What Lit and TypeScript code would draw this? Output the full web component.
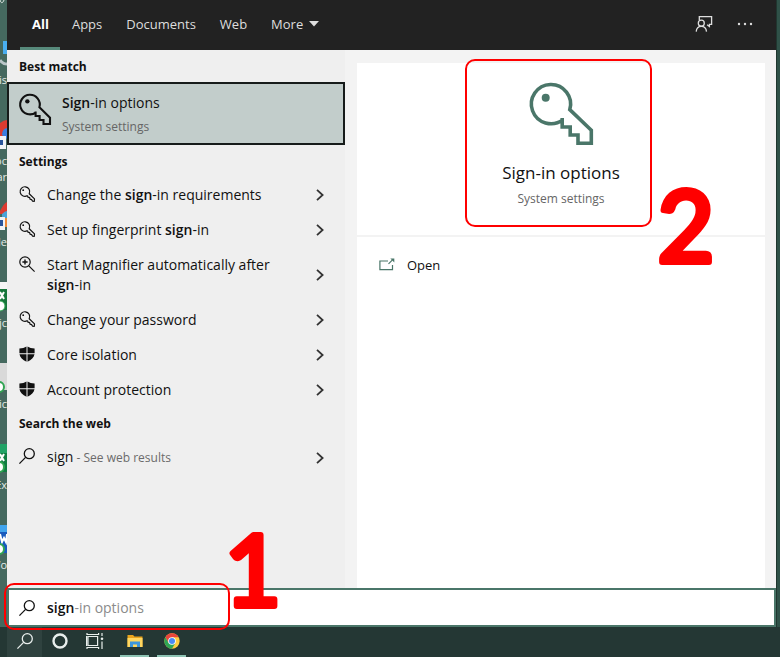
import { LitElement, html, svg, css, nothing } from "lit";
import { customElement, property } from "lit/decorators.js";
import { classMap } from "lit/directives/class-map.js";

type Part = { text: string; strong?: boolean };
type Result = { icon: string; parts: Part[] };

const TABS = ["All", "Apps", "Documents", "Web"];

const SETTINGS: Result[] = [
  { icon: "key", parts: [{ text: "Change the " }, { text: "sign", strong: true }, { text: "-in requirements" }] },
  { icon: "key", parts: [{ text: "Set up fingerprint " }, { text: "sign", strong: true }, { text: "-in" }] },
  { icon: "zoom", parts: [{ text: "Start Magnifier automatically after " }, { text: "sign", strong: true }, { text: "-in" }] },
  { icon: "key", parts: [{ text: "Change your password" }] },
  { icon: "shield", parts: [{ text: "Core isolation" }] },
  { icon: "shield", parts: [{ text: "Account protection" }] },
];

const GLYPHS: Record<string, { box: string; body: unknown }> = {
  bigkey: {
    box: "0 0 64 64",
    body: svg`<path d="M33.2 37V46h8v8H49v8.300h13.300V49.300L40.800 28.600a19.600 19.600 0 1 0-6.800 10" fill="none" stroke="currentColor" stroke-width="3.6"/><circle cx="16.7" cy="16.7" r="4" fill="currentColor"/>`,
  },
  midkey: {
    box: "0 0 64 64",
    body: svg`<path d="M33.2 37V46h8v8H49v8h13V49.300L40.800 28.600a19.600 19.600 0 1 0-6.800 10" fill="none" stroke="currentColor" stroke-width="4.2"/><circle cx="16.7" cy="16.7" r="4.4" fill="currentColor"/>`,
  },
  key: {
    box: "0 0 16 16",
    body: svg`<path d="M8.5 9.6 9 11.2l1.7.5.3 1.5 1.6.4 1 1.6 1.7.1.2-2.4-5.3-5.2A4.8 4.8 0 1 0 8.5 9.6" fill="none" stroke="currentColor" stroke-width="1.2" stroke-linejoin="round"/><circle cx="4.2" cy="4.2" r=".9" fill="currentColor"/>`,
  },
  zoom: {
    box: "0 0 16 16",
    body: svg`<g fill="none" stroke="currentColor" stroke-width="1.2"><circle cx="6" cy="6" r="5.2"/><path d="M9.8 9.8 15.6 15.6"/><path d="M6 3.4v5.2M3.4 6h5.2" stroke-width="1.4"/></g>`,
  },
  shield: {
    box: "0 0 16 16",
    body: svg`<path d="M7.5.4V7.3H.4V2.4C3.3 2.3 5.6 1.6 7.5.4zM8.5.4c1.9 1.2 4.2 1.9 7.1 2v4.900H8.500zM.5 8.300h7v7.400C3.600 14 1 11.600.5 8.300zM8.500 8.300h7c-.5 3.300-3.100 5.700-7 7.400z" fill="currentColor"/>`,
  },
  search: {
    box: "0 0 16 16",
    body: svg`<g fill="none" stroke="currentColor" stroke-width="1.3"><circle cx="10.3" cy="5.7" r="5"/><path d="M6.6 9.4.4 15.6"/></g>`,
  },
  chevron: {
    box: "0 0 8 12",
    body: svg`<path d="M1 .8 6.6 6 1 11.2" fill="none" stroke="currentColor" stroke-width="1.8"/>`,
  },
  caret: { box: "0 0 10 6", body: svg`<path d="M0 0h10L5 5.6z" fill="currentColor"/>` },
  feedback: {
    box: "0 0 18 18",
    body: svg`<g fill="none" stroke="currentColor" stroke-width="1.3"><path d="M4.3 5V1.7h12.3v7.6h-2.2v2.2l-2.3-1.7"/><circle cx="6.3" cy="8.2" r="3"/><path d="M1.2 16.6c.3-3.2 2.2-5.2 5.1-5.2s4.9 2 5.2 5.2"/></g>`,
  },
  dots: {
    box: "0 0 16 16",
    body: svg`<g fill="currentColor"><circle cx="2" cy="8" r="1.2"/><circle cx="8" cy="8" r="1.2"/><circle cx="14" cy="8" r="1.2"/></g>`,
  },
  open: {
    box: "0 0 16 16",
    body: svg`<path d="M9 4H.9v8.600h12.600V8M9.500 6.800 13.500 2.800" fill="none" stroke="currentColor" stroke-width="1.2"/><path d="M11.3 1.5h4v4z" fill="currentColor"/>`,
  },
  cortana: {
    box: "0 0 16 16",
    body: svg`<circle cx="8" cy="8" r="6.5" fill="none" stroke="currentColor" stroke-width="2.4"/>`,
  },
  taskview: {
    box: "0 0 18 16",
    body: svg`<g fill="none" stroke="currentColor" stroke-width="1.2"><path d="M2 3.5h9.6v9H2zM1 0v1.500h11.600V0M1 16v-1.500h11.600V16M.6 3v10M16 0v3M16 8.500V16"/></g><circle cx="16" cy="5.8" r="1.3" fill="currentColor"/>`,
  },
  folder: {
    box: "0 0 16 14",
    body: svg`<path d="M.5 1h5.500l1.500 1.500h8V13H.5z" fill="#e9a41c"/><path d="M.5 4h15v9H.5z" fill="#ffd761"/><path d="M3 13V7.500h10V13h-3v-2.500H6V13z" fill="#3e97dc"/>`,
  },
  chrome: {
    box: "0 0 48 48",
    body: svg`<circle cx="24" cy="24" r="23" fill="#ffcd40"/><path d="M24 12.5h19.9A23 23 0 0 0 4.1 12.5L14 29.8 24 24z" fill="#e8453c"/><path d="M4.1 12.5A23 23 0 0 0 24 47l10-17.300L24 24 14 29.800z" fill="#2ea655"/><circle cx="24" cy="24" r="11.5" fill="#fff"/><circle cx="24" cy="24" r="9" fill="#4a8af4"/>`,
  },
};

const glyph = (name: string) =>
  html`<svg class="glyph ${name}" viewBox=${GLYPHS[name].box} aria-hidden="true">${GLYPHS[name].body}</svg>`;

const parts = (list: Part[]) => list.map((p) => (p.strong ? html`<b>${p.text}</b>` : p.text));

/* A step number with softened corners: the outline is stroked with round joins. */
const digit = (n: number) =>
  html`<svg class="digit" viewBox="0 0 60 90"><text x="30" y="80" text-anchor="middle">${n}</text></svg>`;

const shared = css`
  * { box-sizing: border-box; }
  button, input {
    font: inherit;
    color: inherit;
    background: none;
    border: 0;
    padding: 0;
    margin: 0;
    text-align: left;
  }
  b { font-weight: 600; }
  .glyph { display: block; flex: none; width: 16px; height: 16px; overflow: visible; }
`;

/* Desktop shortcuts, of which only the right edge shows beside the search flyout. */
@customElement("desktop-strip")
class DesktopStrip extends LitElement {
  static styles = css`
    :host { display: block; position: relative; overflow: hidden; background: #45695f; }
    .art { position: absolute; top: 0; right: 0; width: 7px; height: 590px; display: block; }
    .name {
      position: absolute;
      right: 0;
      color: #e4ebe8;
      font: 11px/16px "Open Sans", "Noto Sans", sans-serif;
      white-space: nowrap;
    }
  `;
  render() {
    const names: [string, number][] = [
      ["is", 72], ["oc", 153], ["ar", 169], ["le", 234], ["jc", 315], ["ic", 396], ["Ex", 477], ["Wo", 557],
    ];
    return html`
      <svg class="art" viewBox="0 0 7 590" aria-hidden="true">
        <path d="M0 0c1 4 3 3 4 0" stroke="#dfe6e3" fill="none" />
        <path d="M3 41h4v13H3z" fill="#49aef0" />
        <path d="M0 60c2 3 5 4 7 4" stroke="#b9c6c8" stroke-width="3" fill="none" />
        <path d="M0 123q4-3 7-3v17H0z" fill="#dd3b31" />
        <path d="M7 128q-5 1-5 7l5 4z" fill="#3b7de0" />
        <path d="M0 136h6v13H0z" fill="#f1f3f6" /><path d="M0 140h3v5H0z" fill="#29549b" />
        <path d="M0 211q4-8 7-9v12H0z" fill="#dd3b31" />
        <path d="M2 214q3-3 5-3v8H2z" fill="#4aa3d8" /><path d="M5 218h2v9H5z" fill="#f08a38" />
        <path d="M0 217h5v13H0z" fill="#f1f3f6" /><path d="M0 220h3v6H0z" fill="#29549b" />
        <path d="M0 282h7v8H0z" fill="#f5f5f5" /><path d="M0 289h7v21H0z" fill="#16763a" />
        <path d="M0 292l4 7M4 292l-4 7" stroke="#fff" stroke-width="2" />
        <circle cx="0" cy="306" r="5" fill="#fff" stroke="#31a553" />
        <path d="M0 363h7v27H0z" fill="#d9d9d9" />
        <circle cx="-1" cy="387" r="5" fill="#fff" stroke="#31a553" stroke-width="2" />
        <path d="M0 444h7v9H0z" fill="#21a366" /><path d="M0 453h7v19H0z" fill="#107c41" />
        <path d="M0 454l4 7M4 454l-4 7" stroke="#fff" stroke-width="2" />
        <circle cx="-1" cy="467" r="5" fill="#fff" stroke="#31a553" stroke-width="2" />
        <path d="M0 525h7v7H0z" fill="#41a5ee" /><path d="M0 532h7v21H0z" fill="#185abd" />
        <path d="M0 534l2 8 2-4 2 4 1-8" stroke="#fff" stroke-width="2" fill="none" />
        <circle cx="-1" cy="549" r="5" fill="#fff" stroke="#31a553" stroke-width="2" />
      </svg>
      ${names.map(([text, top]) => html`<span class="name" style="top:${top}px">${text}</span>`)}
    `;
  }
}

@customElement("result-row")
class ResultRow extends LitElement {
  @property({ attribute: false }) icon = "search";
  @property({ attribute: false }) parts: Part[] = [];
  @property() note = "";
  static styles = [
    shared,
    css`
      :host { display: block; }
      .row { display: flex; width: 100%; align-items: flex-start; padding: 8px 21px 7px 12px; line-height: 20px; font-size: 14px; }
      .text { flex: 1; min-width: 0; margin: 0 20px 0 12px; }
      .row .glyph { margin-top: 1px; }
      .row .chevron { width: 8px; height: 12px; margin: 0; align-self: center; color: #333; }
      .note { font-size: 12px; color: #6b6b6b; }
    `,
  ];
  render() {
    return html`<button class="row">
      ${glyph(this.icon)}
      <span class="text">${parts(this.parts)}${this.note ? html`<span class="note"> - ${this.note}</span>` : nothing}</span>
      ${glyph("chevron")}
    </button>`;
  }
}

@customElement("app-root")
class AppRoot extends LitElement {
  static styles = [
    shared,
    css`
      :host {
        display: flex;
        flex-direction: column;
        min-height: 100vh;
        background: #45695f;
        color: #111;
        font: 14px/20px "Open Sans", "Noto Sans", sans-serif;
      }
      .desk { flex: 1; display: grid; grid-template-columns: 7px minmax(0, 1fr) 4px; }
      .edge { background: #2f5148; border-left: 1px solid #20362f; }
      .flyout { display: flex; flex-direction: column; min-width: 0; }

      .top { display: flex; align-items: stretch; height: 50px; padding: 0 23px 0 13px; background: #222; color: #dedede; font-size: 13px; }
      .tab { padding: 1px 12px 0; border-bottom: 3px solid transparent; display: flex; align-items: center; gap: 6px; }
      .tab.on { padding: 1px 11px 0 12px; color: #fff; font-weight: 700; border-color: #578a7b; }
      .caret { width: 10px; height: 6px; }
      .tools { margin-left: auto; display: flex; align-items: center; gap: 24px; padding-bottom: 2px; }
      .feedback { width: 18px; height: 18px; }

      .body { flex: 1; display: grid; grid-template-columns: 338px minmax(0, 1fr); }
      .results { background: #efefef; }
      .heading { margin: 0; padding: 2px 12px 0; font-size: 12px; line-height: 30px; font-weight: 700; }
      .best { display: flex; align-items: flex-start; width: 100%; height: 63px; padding: 9px 10px; gap: 11px; background: #c2cdcb; border: 2px solid #161b1a; }
      .midkey { width: 32px; height: 32px; }
      .best .kind { display: block; margin-top: 4px; }
      .kind { font-size: 12px; color: #666; }

      .preview { display: flex; flex-direction: column; gap: 2px; padding: 13px 11px 0 12px; background: #f3f3f3; }
      .hero { background: #fff; height: 172px; display: flex; justify-content: center; }
      .card { position: relative; display: flex; flex-direction: column; align-items: center; padding-top: 18px; }
      .bigkey { width: 64px; height: 64px; color: #4a7669; }
      .title { margin: 16px 0 0; font-size: 17px; line-height: 24px; font-weight: 400; }
      .card .kind { margin-top: 4px; }
      .actions { flex: 1; background: #fff; padding: 18px 22px; }
      .action { display: flex; align-items: center; gap: 12px; font-size: 13px; }
      .open { color: #4a7669; }

      .searchbox { position: relative; display: flex; align-items: center; height: 39px; padding: 0 10px; background: #fff; border: 2px solid #4a7669; }
      .query { field-sizing: content; margin-left: 12px; font-weight: 600; outline: none; }
      .ghost { color: #8b8b8b; }

      .mark { position: absolute; border: 2px solid #f00; border-radius: 10px; pointer-events: none; }
      .mark.one { top: -7px; left: -5px; width: 226px; height: 47px; }
      .mark.two { top: -4px; left: 50%; width: 187px; height: 168px; margin-left: -96px; }
      .digit { position: absolute; width: 60px; height: 90px; overflow: visible; }
      .digit text { font: 400 98px Lato, sans-serif; fill: #f00; stroke: #f00; stroke-width: 6px; stroke-linejoin: round; }
      .one .digit { left: 217px; bottom: 12px; }
      .two .digit { left: 189px; bottom: -47px; }

      .taskbar { display: flex; height: 30px; padding-left: 7px; background: #243734; color: #e8eeec; }
      .task { display: flex; align-items: center; justify-content: center; width: 35px; border-bottom: 2px solid transparent; }
      .task.on { background: #2f423f; }
      .task.running { width: 29px; margin-left: 8px; border-color: #8fc4b4; }
      .taskview { width: 18px; }
      .folder { height: 14px; }
    `,
  ];

  render() {
    const tasks = ["search", "cortana", "taskview", "folder", "chrome"];
    const labels = ["Search", "Cortana", "Task View", "File Explorer", "Chrome"];
    return html`
      <div class="desk">
        <desktop-strip></desktop-strip>
        <main class="flyout">
          <nav class="top">
            ${TABS.map((t, i) => html`<button class=${classMap({ tab: true, on: i === 0 })}>${t}</button>`)}
            <button class="tab">More ${glyph("caret")}</button>
            <div class="tools">
              <button aria-label="Feedback">${glyph("feedback")}</button>
              <button aria-label="Options">${glyph("dots")}</button>
            </div>
          </nav>
          <div class="body">
            <section class="results">
              <h2 class="heading">Best match</h2>
              <button class="best">
                ${glyph("midkey")}
                <span><b>Sign</b>-in options<span class="kind">System settings</span></span>
              </button>
              <h2 class="heading">Settings</h2>
              ${SETTINGS.map((r) => html`<result-row .icon=${r.icon} .parts=${r.parts}></result-row>`)}
              <h2 class="heading">Search the web</h2>
              <result-row .parts=${[{ text: "sign" }]} note="See web results"></result-row>
            </section>
            <section class="preview">
              <div class="hero">
                <div class="card">
                  ${glyph("bigkey")}
                  <h1 class="title">Sign-in options</h1>
                  <span class="kind">System settings</span>
                  <div class="mark two">${digit(2)}</div>
                </div>
              </div>
              <div class="actions">
                <button class="action">${glyph("open")}<span>Open</span></button>
              </div>
            </section>
          </div>
          <div class="searchbox">
            ${glyph("search")}
            <input class="query" type="text" aria-label="Search" .value=${"sign"} />
            <span class="ghost">-in options</span>
            <div class="mark one">${digit(1)}</div>
          </div>
        </main>
        <div class="edge"></div>
      </div>
      <footer class="taskbar">
        ${tasks.map(
          (t, i) => html`<button class=${classMap({ task: true, on: i === 0, running: i > 2 })} aria-label=${labels[i]}>${glyph(t)}</button>`,
        )}
      </footer>
    `;
  }
}
